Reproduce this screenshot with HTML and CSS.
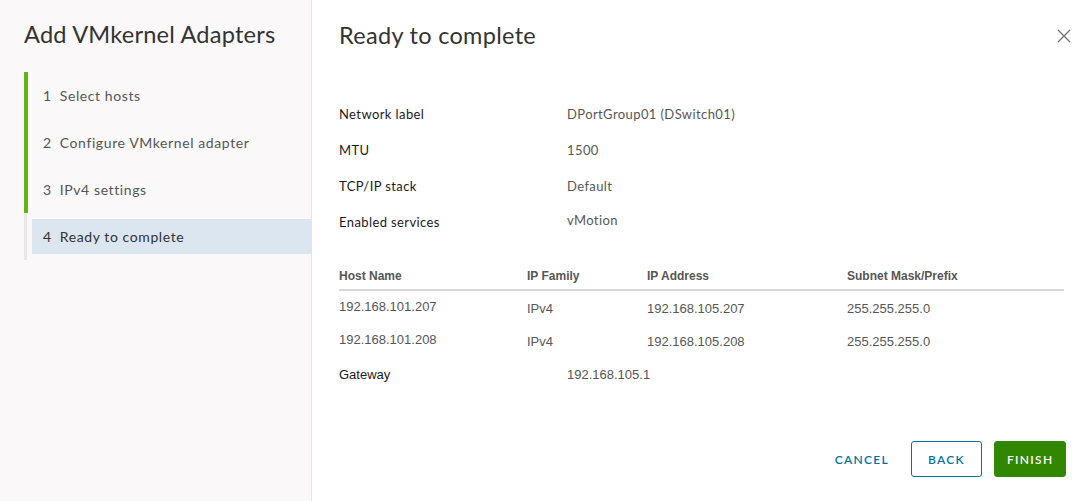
FILE: index.html
```html
<!DOCTYPE html>
<html>
<head>
<meta charset="utf-8">
<link rel="stylesheet" href="styles.css">
</head>
<body>
<div class="modal">
  <aside class="sidebar">
    <h1 class="sidebar-title">Add VMkernel Adapters</h1>
    <ol class="steps">
      <li class="step done"><span class="step-link"><span class="num">1</span>Select hosts</span></li>
      <li class="step done"><span class="step-link"><span class="num">2</span>Configure VMkernel adapter</span></li>
      <li class="step done"><span class="step-link"><span class="num">3</span>IPv4 settings</span></li>
      <li class="step current"><span class="step-link"><span class="num">4</span>Ready to complete</span></li>
    </ol>
  </aside>
  <main class="content">
    <header class="content-header">
      <h2 class="content-title">Ready to complete</h2>
      <button class="close" aria-label="Close">
        <svg width="14" height="14" viewBox="0 0 14 14"><path d="M1 1 L13 13 M13 1 L1 13" stroke="#747474" stroke-width="1.4" fill="none"/></svg>
      </button>
    </header>
    <div class="body">
      <div class="kv">
        <div class="kv-row"><span class="k">Network label</span><span class="v">DPortGroup01 (DSwitch01)</span></div>
        <div class="kv-row"><span class="k">MTU</span><span class="v">1500</span></div>
        <div class="kv-row"><span class="k">TCP/IP stack</span><span class="v">Default</span></div>
        <div class="kv-row"><span class="k">Enabled services</span><span class="v up">vMotion</span></div>
      </div>
      <table class="hosts">
        <thead>
          <tr><th class="c1">Host Name</th><th class="c2">IP Family</th><th class="c3">IP Address</th><th class="c4">Subnet Mask/Prefix</th></tr>
        </thead>
        <tbody>
          <tr><td><span class="up1">192.168.101.207</span></td><td><span class="down">IPv4</span></td><td><span class="down">192.168.105.207</span></td><td><span class="down">255.255.255.0</span></td></tr>
          <tr><td><span class="up1">192.168.101.208</span></td><td><span class="down">IPv4</span></td><td><span class="down">192.168.105.208</span></td><td><span class="down">255.255.255.0</span></td></tr>
        </tbody>
      </table>
      <div class="gateway"><span class="gk">Gateway</span><span class="gv">192.168.105.1</span></div>
    </div>
    <footer class="footer">
      <button class="btn btn-link">CANCEL</button>
      <button class="btn btn-outline">BACK</button>
      <button class="btn btn-primary">FINISH</button>
    </footer>
  </main>
</div>
</body>
</html>
```

FILE: styles.css
```css
* { box-sizing: border-box; }
html, body { margin: 0; padding: 0; }
body {
  width: 1091px;
  height: 501px;
  background: #fff;
  font-family: Lato, "Open Sans", sans-serif;
  color: #333;
  overflow: hidden;
}
.modal {
  display: flex;
  height: 501px;
}
.sidebar {
  width: 312px;
  flex: 0 0 312px;
  background: #faf8f8;
  border-right: 1px solid #e6e3e3;
  padding: 16px 0 0 24px;
}
.sidebar-title {
  margin: 0;
  font-size: 23.6px;
  line-height: 36px;
  font-weight: 400;
  color: #333;
  letter-spacing: 0.2px;
}
.steps {
  list-style: none;
  margin: 20px 0 0 0;
  padding: 0;
}
.step {
  height: 47px;
  border-left: 4px solid #60b515;
  display: flex;
  align-items: center;
}
.step.current {
  border-left: 3px solid #e8e8e8;
}
.step-link {
  flex: 1;
  display: flex;
  align-items: center;
  height: 35px;
  margin-left: 4px;
  padding-left: 11px;
  font-size: 14px;
  letter-spacing: 0.6px;
  color: #565656;
}
.step.current .step-link {
  margin-left: 5px;
  background: #dce6f1;
  color: #313131;
}
.num { margin-right: 8px; }

.content {
  flex: 1;
  display: flex;
  flex-direction: column;
  padding: 17px 19px 24px 27px;
}
.content-header {
  display: flex;
  justify-content: space-between;
  align-items: center;
  height: 36px;
}
.content-title {
  margin: 0;
  font-size: 23.5px;
  line-height: 36px;
  font-weight: 400;
  color: #333;
  letter-spacing: 0.3px;
}
.close {
  background: none;
  border: 0;
  padding: 0;
  width: 16px;
  height: 16px;
  display: flex;
  align-items: center;
  justify-content: center;
  margin-top: 2px;
}
.body {
  flex: 1;
  padding-top: 43px;
  padding-right: 8px;
}
.kv-row {
  display: flex;
  height: 36px;
  align-items: center;
  font-size: 13px;
  letter-spacing: 0.4px;
}
.k { width: 228px; color: #1a1a1a; }
.v { color: #565656; }
.up { position: relative; top: -2px; }
.up1 { position: relative; top: -1px; }
.down { position: relative; top: 1px; }

.hosts {
  width: 725px;
  border-collapse: collapse;
  margin-top: 20px;
  font-family: "Liberation Sans", Arial, sans-serif;
  font-size: 13px;
  color: #565656;
}
.hosts th {
  text-align: left;
  font-size: 12px;
  font-weight: 700;
  color: #565656;
  height: 30px;
  padding: 2px 0 0 0;
  border-bottom: 2px solid #d7d7d7;
}
.c1 { width: 188px; }
.c2 { width: 120px; }
.c3 { width: 200px; }
.hosts td {
  height: 33px;
  padding: 0;
  vertical-align: middle;
}
.hosts tbody tr:last-child td { padding-top: 1px; }
.gateway {
  display: flex;
  align-items: center;
  height: 36px;
  padding-top: 1px;
  font-family: "Liberation Sans", Arial, sans-serif;
  font-size: 13px;
}
.gk { width: 228px; color: #1a1a1a; }
.gv { color: #565656; }

.footer {
  display: flex;
  justify-content: flex-end;
  align-items: center;
  gap: 12px;
  padding-right: 6px;
}
.btn {
  height: 36px;
  font-family: Lato, "Open Sans", sans-serif;
  font-size: 12px;
  font-weight: 600;
  letter-spacing: 1.3px;
  border-radius: 3px;
  padding: 0 12px;
  background: none;
  border: 1px solid transparent;
  cursor: pointer;
}
.btn-link { color: #0072a3; margin-right: -3px; }
.btn-outline {
  width: 71px;
  color: #0072a3;
  border-color: #0072a3;
}
.btn-primary {
  width: 72px;
  background: #318700;
  border-color: #318700;
  color: #fff;
}
```
